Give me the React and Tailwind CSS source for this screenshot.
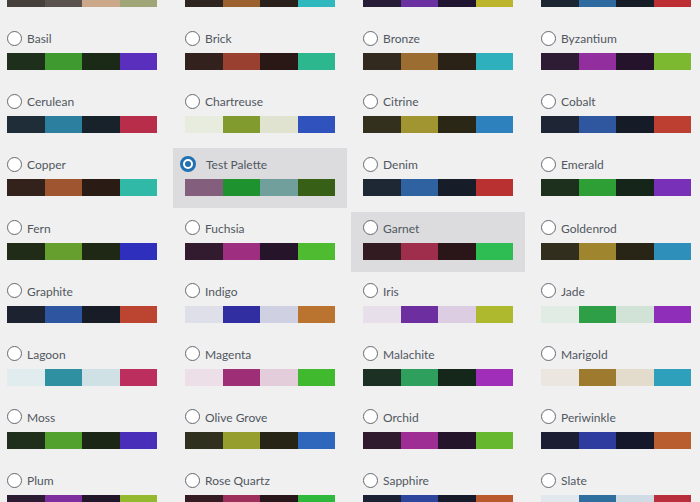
import React, { useState } from 'react';

const palettes = [
  { name: 'Ash', colors: ['#46403d', '#5a524e', '#cca88b', '#a0a577'] },
  { name: 'Autumn', colors: ['#2e2520', '#9b612e', '#2a201b', '#2fb9bf'] },
  { name: 'Aubergine', colors: ['#271d37', '#6b31a0', '#1f1530', '#bcb52c'] },
  { name: 'Azure', colors: ['#1c2632', '#2e6aa0', '#161d27', '#bc2d34'] },
  { name: 'Basil', colors: ['#1e2f1c', '#3f9a2f', '#1a2a16', '#5b2fbd'] },
  { name: 'Brick', colors: ['#33211e', '#9a4030', '#291815', '#2db78e'] },
  { name: 'Bronze', colors: ['#322a1e', '#9c6d30', '#2a2117', '#2fb0bd'] },
  { name: 'Byzantium', colors: ['#2e1b34', '#922e9e', '#24132a', '#7db930'] },
  { name: 'Cerulean', colors: ['#1e2d38', '#2d7fa0', '#17222b', '#b82d4a'] },
  { name: 'Chartreuse', colors: ['#e8ecde', '#819b2f', '#dfe3cf', '#2f52bd'] },
  { name: 'Citrine', colors: ['#33301e', '#a09531', '#2a2716', '#2d81bd'] },
  { name: 'Cobalt', colors: ['#1e2636', '#2e57a0', '#161b28', '#bc3f31'] },
  { name: 'Copper', colors: ['#33221b', '#9e5530', '#2a1b15', '#2fb9a6'] },
  { name: 'Test Palette', colors: ['#835e7d', '#1e922f', '#709f9c', '#385f16'] },
  { name: 'Denim', colors: ['#1e2734', '#2e62a0', '#161c28', '#b93131'] },
  { name: 'Emerald', colors: ['#1c301d', '#2e9f35', '#16251a', '#7830b9'] },
  { name: 'Fern', colors: ['#202c18', '#669f2e', '#1f2815', '#2f2fbd'] },
  { name: 'Fuchsia', colors: ['#321b2e', '#9e2e80', '#25142a', '#4fbb31'] },
  { name: 'Garnet', colors: ['#321c21', '#9e2e4b', '#2a1519', '#2ebd52'] },
  { name: 'Goldenrod', colors: ['#312e1e', '#9e852e', '#282516', '#2e8fbb'] },
  { name: 'Graphite', colors: ['#1c2230', '#2e56a0', '#171c27', '#bb4530'] },
  { name: 'Indigo', colors: ['#dfdfea', '#302ea0', '#d0d0e3', '#bb7430'] },
  { name: 'Iris', colors: ['#e7e0ea', '#6d2ea0', '#dccde3', '#aeb92e'] },
  { name: 'Jade', colors: ['#e0ece4', '#2e9f46', '#d0e3d6', '#8e2eb9'] },
  { name: 'Lagoon', colors: ['#e1ecee', '#2e90a0', '#cfe1e5', '#bb2e5e'] },
  { name: 'Magenta', colors: ['#ecdfe8', '#9e2e76', '#e3cdda', '#40b92f'] },
  { name: 'Malachite', colors: ['#1c3024', '#2e9f5c', '#15271b', '#a12eb9'] },
  { name: 'Marigold', colors: ['#ebe7e0', '#9e7a2e', '#e3dccd', '#2ea0bb'] },
  { name: 'Moss', colors: ['#202f1c', '#52a02e', '#1b2616', '#482eb9'] },
  { name: 'Olive Grove', colors: ['#2f301e', '#969e2e', '#272616', '#2e67bb'] },
  { name: 'Orchid', colors: ['#301b2e', '#9e2e94', '#25152a', '#66b92e'] },
  { name: 'Periwinkle', colors: ['#1c1f34', '#2e3ca0', '#15182a', '#b95e2e'] },
  { name: 'Plum', colors: ['#2b1c34', '#7f2ea0', '#21162a', '#94b92e'] },
  { name: 'Rose Quartz', colors: ['#341c22', '#9e2e5c', '#28161a', '#2eb93c'] },
  { name: 'Sapphire', colors: ['#1c2034', '#2e459e', '#161a2a', '#bb592e'] },
  { name: 'Slate', colors: ['#e1e7ec', '#2e6fa0', '#cfdbe5', '#b92e3c'] },
];

// Radio button, WP admin style
const Radio = ({ checked }) =>
  checked ? (
    <span className="w-4 h-4 ml-[-5px] mr-[10px] rounded-full border-[3px] border-[#2271b1] bg-white flex items-center justify-center shrink-0">
      <span className="w-[6px] h-[6px] rounded-full bg-[#2271b1]" />
    </span>
  ) : (
    <span className="w-[15px] h-[15px] mr-[5px] rounded-full border border-[#646970] bg-white shrink-0" />
  );

const PaletteOption = ({ palette, selected, hovered, onSelect }) => (
  <div
    onClick={onSelect}
    className={`h-[60px] px-3 pt-[6px] cursor-pointer ${selected || hovered ? 'bg-[#dcdcde]' : ''}`}
  >
    <div className="h-[20px] flex items-center">
      <Radio checked={selected} />
      <span className="text-[12px] text-[#50575e] leading-none pt-[2px]">{palette.name}</span>
    </div>
    <div className="mt-[5px] flex h-[17px] w-[150px]">
      {palette.colors.map((c, i) => (
        <div key={i} className="flex-1" style={{ backgroundColor: c }} />
      ))}
    </div>
  </div>
);

const App = () => {
  const [selected, setSelected] = useState('Test Palette');

  return (
    <div
      className="w-[700px] h-[502px] overflow-hidden bg-[#f0f0f1]"
      style={{ fontFamily: 'Lato, "Open Sans", sans-serif' }}
    >
      <div className="grid grid-cols-[repeat(4,174px)] gap-x-1 gap-y-[3.14px] ml-[-5px] mt-[-41px]">
        {palettes.map((p) => (
          <PaletteOption
            key={p.name}
            palette={p}
            selected={selected === p.name}
            hovered={p.name === 'Garnet'}
            onSelect={() => setSelected(p.name)}
          />
        ))}
      </div>
    </div>
  );
};

export default App;
